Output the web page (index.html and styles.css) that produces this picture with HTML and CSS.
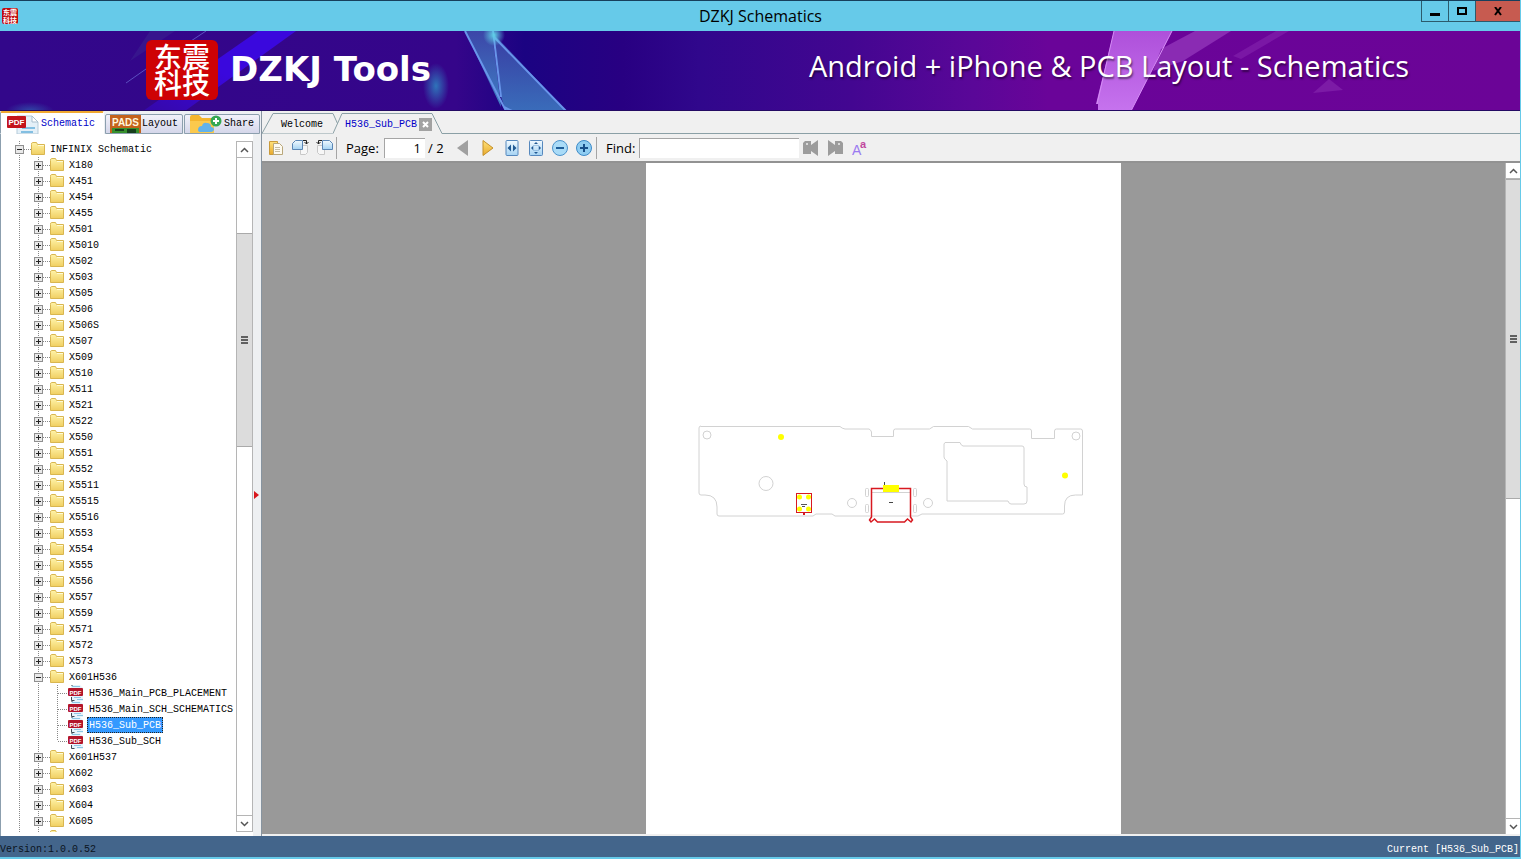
FILE: index.html
```
<!DOCTYPE html>
<html lang="en">
<head>
	<meta charset="UTF-8">
	<title>DZKJ Schematics</title>
	<link rel="stylesheet" href="styles.css">
</head>
<body>
<!-- icons used more than once -->
<svg class="defs" width="0" height="0">
	<defs>
		<linearGradient id="gFolder" x1="0" y1="0" x2="0" y2="1">
			<stop offset="0" stop-color="#fff3a8"/><stop offset="1" stop-color="#f0cf62"/>
		</linearGradient>
		<linearGradient id="gBlue" x1="0" y1="0" x2="0" y2="1">
			<stop offset="0" stop-color="#f2faff"/><stop offset="1" stop-color="#a5d3f3"/>
		</linearGradient>
		<linearGradient id="gGold" x1="0" y1="0" x2="0" y2="1">
			<stop offset="0" stop-color="#ffe27a"/><stop offset="1" stop-color="#e8a92c"/>
		</linearGradient>
	</defs>
	<symbol id="folder" viewBox="0 0 14 13">
		<path d="M.500 2.500q0-2 1-2h4l1 2h7v10H.500z" fill="url(#gFolder)" stroke="#d9b650"/>
		<path d="M7 3.500h6" stroke="#fffbd6"/>
	</symbol>
	<symbol id="pdf" viewBox="0 0 16 16">
		<path d="M3 0h9l3 3v13H3z" fill="#e6f3fb"/>
		<path d="M4 1.500h8M6 12.500h7M9 14.500h6" stroke="#8cc7e4"/>
		<path d="M4 0v1M3.500 12v3.500h3" fill="none" stroke="#3e4a55"/>
		<rect x="0" y="3" width="15" height="8" rx="1" fill="#b3152a"/>
		<text x="7.500" y="9.500" class="pdf-text">PDF</text>
	</symbol>
	<symbol id="up" viewBox="0 0 9 6"><path d="M1 5l3.500-3.500L8 5" fill="none" stroke="#555" stroke-width="1.500"/></symbol>
	<symbol id="down" viewBox="0 0 9 6"><path d="M1 1l3.500 3.500L8 1" fill="none" stroke="#555" stroke-width="1.500"/></symbol>
</svg>

<header class="titlebar">
	<div class="app-icon">东震<br>科技</div>
	<h1>DZKJ Schematics</h1>
	<div class="win-btns">
		<button type="button" aria-label="Minimize"><svg width="11" height="11"><path d="M0 7h10v3H0z"/></svg></button>
		<button type="button" aria-label="Maximize"><svg width="11" height="9"><path d="M1 1h8v6H1z" fill="none" stroke="#000" stroke-width="2"/></svg></button>
		<button type="button" class="close" aria-label="Close"><svg width="9" height="9"><path d="M1 0l6 8M7 0L1 8" stroke="#000" stroke-width="2"/></svg></button>
	</div>
</header>

<div class="banner">
	<svg class="banner-bg" viewBox="0 0 1520 80" preserveAspectRatio="none">
		<defs>
			<linearGradient id="gBanner">
				<stop offset="0" stop-color="#32078a"/>
				<stop offset=".3" stop-color="#35058a"/>
				<stop offset=".345" stop-color="#1b0382"/>
				<stop offset=".41" stop-color="#280082"/>
				<stop offset=".46" stop-color="#30078c"/>
				<stop offset=".56" stop-color="#430691"/>
				<stop offset=".64" stop-color="#5a0798"/>
				<stop offset=".69" stop-color="#6a0499"/>
				<stop offset="1" stop-color="#6b0497"/>
			</linearGradient>
			<linearGradient id="gShard" x1="0" y1="0" x2="0" y2="1">
				<stop offset="0" stop-color="#3c46a8"/><stop offset="1" stop-color="#3f7fc4"/>
			</linearGradient>
			<linearGradient id="gPink" x1="0" y1="0" x2="0" y2="1">
				<stop offset="0" stop-color="#ae50da"/><stop offset="1" stop-color="#c673ee"/>
			</linearGradient>
			<linearGradient id="gBeam" x1="1" y1="0" x2="0" y2="1">
				<stop offset="0" stop-color="#3a08dd"/><stop offset=".5" stop-color="#3a08dd"/><stop offset="1" stop-color="#3508a8"/>
			</linearGradient>
			<radialGradient id="gGlow">
				<stop offset="0" stop-color="#2f74ba"/><stop offset="1" stop-color="#2f74ba" stop-opacity="0"/>
			</radialGradient>
			<radialGradient id="gSpark">
				<stop offset="0" stop-color="#5fd0e6"/><stop offset="1" stop-color="#5fd0e6" stop-opacity="0"/>
			</radialGradient>
		</defs>
		<rect width="1520" height="80" fill="url(#gBanner)"/>
		<path d="M258 0h38L185 80h-42z" fill="url(#gBeam)"/>
		<path d="M150 0h25l-45 30z" fill="#3a2090" opacity=".6"/>
		<path d="M206 0l-18 12M146 38l-20 14" stroke="#5b4fc0"/>
		<ellipse cx="436" cy="55" rx="13" ry="23" fill="url(#gGlow)"/>
		<ellipse cx="30" cy="80" rx="24" ry="9" fill="url(#gGlow)" opacity=".6"/>
		<path d="M465 0h27l9 76z" fill="url(#gShard)"/>
		<path d="M493 2l73 78h-60l-5-14z" fill="url(#gShard)" opacity=".85"/>
		<path d="M465 0l41 80M493 0l8 66M493 5l73 75M504 76l8 4" fill="none" stroke="#6895ea" stroke-width="2"/>
		<circle cx="494" cy="4" r="11" fill="url(#gSpark)"/>
		<path d="M1114 0h58l-41 80h-33v-7h-2z" fill="url(#gPink)"/>
		<path d="M1195 0h36l-48 30-30 10 8-22z" fill="#8a2bb3"/>
		<path d="M1276 0h13l-48 28-8-3z" fill="#7a17a5"/>
		<path d="M1329 48l14 11-30 3z" fill="#7c1ba6"/>
		<path d="M1114 0l-17 73M1172 0l-41 80" stroke="#d58cf5"/>
		<path d="M0 79.500h1520" stroke="#240a63"/>
	</svg>
	<div class="logo">东震<br>科技</div>
	<div class="brand">DZKJ Tools</div>
	<div class="slogan">Android + iPhone &amp; PCB Layout - Schematics</div>
</div>

<div class="main">
	<aside class="side">
		<nav class="side-tabs">
			<button type="button" class="active">
				<svg width="32" height="19" viewBox="0 0 32 19">
					<path d="M10 1h15l6 6v12H10z" fill="#e4f0f8" stroke="#b5cbd9"/>
					<path d="M25 1v6h6z" fill="#fff" stroke="#a9bfce"/>
					<path d="M15 13h13M14 17h12" stroke="#83bfe2" stroke-width="2"/>
					<rect x="0" y="1" width="19" height="12" rx="1" fill="#c4141c"/>
					<text x="9.500" y="10" class="pdf-tab-text">PDF</text>
				</svg>Schematic</button>
			<button type="button" class="tab-layout">
				<svg width="31" height="18" viewBox="0 0 31 18">
					<rect width="31" height="18" fill="#c4621c"/>
					<path d="M2 13h27v5H2z" fill="#36902c"/><path d="M5 14h9v2H5zM17 14h9v4h-9z" fill="#163f1c"/>
					<text x="15.500" y="11" class="pads-text">PADS</text>
				</svg>Layout</button>
			<button type="button" class="tab-share">
				<svg width="32" height="18" viewBox="0 0 32 18">
					<path d="M0 2q0-2 2-2h7l3 3h12v15H0z" fill="#f5b52e"/><path d="M0 6h24v12H0z" fill="#fbc94d"/>
					<path d="M8 15q0-4 4-4 1-4 5-3 4 0 4 4 3 0 3 3-1 2-3 2H11q-3 0-3-2z" fill="#62b2ea"/>
					<circle cx="26" cy="6" r="5.500" fill="#35a853"/><path d="M26 3v6M23 6h6" stroke="#fff" stroke-width="2"/>
				</svg>Share</button>
		</nav>
		<div class="side-body">
			<div class="tree-view"><ul class="tree" id="tree"></ul></div>
			<div class="scrollbar">
				<button type="button" aria-label="Scroll up"><svg width="9" height="6"><use href="#up"/></svg></button>
				<div class="track side-track"><div class="thumb"><i></i></div></div>
				<button type="button" aria-label="Scroll down"><svg width="9" height="6"><use href="#down"/></svg></button>
			</div>
			<div class="splitter"><svg width="5" height="8"><path d="M0 0l5 4-5 4z" fill="#d8161c"/></svg></div>
		</div>
	</aside>

	<section class="viewer">
		<div class="doc-tabs">
			<div class="doc-tab">
				<svg width="80" height="21"><path d="M0 20.500L11 .500h60l9 20" fill="#f0f0f0" stroke="#8ba0a6"/></svg>
				<button type="button">Welcome</button>
			</div>
			<div class="doc-tab current">
				<svg width="109" height="22"><path d="M0 21.500V20.500L9 .500h90l10 20v1" fill="#f0f0f0"/><path d="M0 20.500L9 .500h90l10 20" fill="none" stroke="#8ba0a6"/></svg>
				<button type="button">H536_Sub_PCB</button>
				<button type="button" class="tab-close" aria-label="Close tab"><svg width="7" height="7"><path d="M1 1l5 5M6 1L1 6" stroke="#fff" stroke-width="2"/></svg></button>
			</div>
		</div>

		<div class="toolbar">
			<button type="button" aria-label="Open"><svg width="16" height="16">
				<path d="M1.500 1.500h8v13h-8z" fill="url(#gGold)" stroke="#c99a3a"/>
				<path d="M5.500 3.500h6l3 3v8h-9z" fill="#fdfaf0" stroke="#b9a77b"/><path d="M7 7.500h5M7 9.500h5M7 11.500h5" stroke="#c5bda6"/></svg></button>
			<button type="button" aria-label="Rotate right"><svg width="17" height="17">
				<path d="M8.500 6.500h7v7l-2 2h-5z" fill="#f7f7f7" stroke="#c8c8c8"/>
				<path d="M.500 4.500l3-3h7v9H.500z" fill="url(#gBlue)" stroke="#5b86b5"/><path d="M11 1.500h3.500V5M12.500 3l2 2 2-2" fill="none" stroke="#222"/></svg></button>
			<button type="button" aria-label="Rotate left"><svg width="17" height="17">
				<path d="M1.500 6.500h7v9h-5l-2-2z" fill="#f7f7f7" stroke="#c8c8c8"/>
				<path d="M6.500 1.500h7l3 3v6h-10z" fill="url(#gBlue)" stroke="#5b86b5"/><path d="M6 1.500H2.500V5M.500 3l2 2 2-2" fill="none" stroke="#222"/></svg></button>
			<span class="sep"></span>
			<label for="page">Page:</label>
			<input type="text" id="page" value="1">
			<span class="pages">/ 2</span>
			<button type="button" aria-label="Previous page"><svg width="12" height="16"><path d="M11 0v16L0 8z" fill="#a0a0a0"/></svg></button>
			<button type="button" class="next" aria-label="Next page"><svg width="12" height="16"><path d="M1 .500L11 8 1 15.500z" fill="url(#gGold)" stroke="#c4902a"/></svg></button>
			<button type="button" aria-label="Fit width"><svg width="14" height="16"><rect x="1" y=".500" width="12" height="15" rx="1" fill="url(#gBlue)" stroke="#5688bd"/><path d="M6 4.500v7L2.500 8zM8 4.500v7L11.500 8z" fill="#225a93"/></svg></button>
			<button type="button" aria-label="Fit page"><svg width="14" height="16"><rect x=".500" y=".500" width="13" height="15" rx="1" fill="url(#gBlue)" stroke="#5688bd"/><path d="M7 2l2 2H5zM7 14l2-2H5zM2 8l2-2v4zM12 8l-2-2v4z" fill="#225a93"/><rect x="4.500" y="5.500" width="5" height="5" fill="none" stroke="#6e9fcc" stroke-dasharray="1"/></svg></button>
			<button type="button" aria-label="Zoom out"><svg width="16" height="16"><circle cx="8" cy="8" r="7.500" fill="#a9dbf7" stroke="#4c93cc"/><path d="M4 8h8" stroke="#1d5d99" stroke-width="2"/></svg></button>
			<button type="button" aria-label="Zoom in"><svg width="16" height="16"><circle cx="8" cy="8" r="7.500" fill="#8fcdf2" stroke="#3d8bc8"/><path d="M4 8h8M8 4v8" stroke="#164f8a" stroke-width="2"/></svg></button>
			<span class="sep"></span>
			<label for="find">Find:</label>
			<input type="text" id="find">
			<button type="button" aria-label="Find previous"><svg width="16" height="16"><path d="M0 3l2-2h6v4l7-5v16l-7-5v3H0z" fill="#9c9c9c"/><circle cx="4" cy="4" r="1" fill="#eee"/></svg></button>
			<button type="button" aria-label="Find next"><svg width="16" height="16"><path d="M16 3l-2-2H8v4L1 0v16l7-5v3h8z" fill="#9c9c9c"/><circle cx="12" cy="4" r="1" fill="#eee"/></svg></button>
			<button type="button" aria-label="Match case"><svg width="15" height="16"><text x="0" y="15" class="case-big">A</text><text x="8" y="8" class="case-small">a</text></svg></button>
		</div>

		<div class="doc">
			<div class="canvas">
				<div class="sheet">
					<svg class="board" viewBox="646 163 475 671">
						<g fill="none" stroke="#d2d2d2">
							<path d="M701 426.500H840q2 2 5 2.500h24q2 1 2.500 3v4.500h22V431q0-2 2-2h34l4-2.500h35l4 2.500h57q2 0 2 2v7.500h23V431q0-2 2-2h24q2 0 2 2v64h-7q-11 0-11 11v6q0 2-2 2H922l-4 2h-83l-3-2h-16l-3 2h-94q-2 0-2-2v-7q0-12-12-12h-4q-2 0-2-2v-65q0-2 2-2z"/>
							<path d="M945 442.500h15q1 3 3 3.500h59q2 0 2 2v36q0 3 3 3v14q0 3-3 3h-13q-2 0-3-3h-61v-40q-3-2-3-4v-13z"/>
							<circle cx="707" cy="435" r="4"/><circle cx="1076" cy="436" r="4"/>
							<circle cx="766" cy="483.500" r="7"/><circle cx="852" cy="503" r="4.500"/><circle cx="928" cy="503" r="4.500"/>
							<rect x="865.500" y="488.500" width="3" height="8" rx="1"/><rect x="865.500" y="504.500" width="3" height="8" rx="1"/>
							<rect x="913.500" y="488.500" width="3" height="8" rx="1"/><rect x="913.500" y="504.500" width="3" height="8" rx="1"/>
							<path d="M872 492.500h38"/>
						</g>
						<g fill="#ff0">
							<circle cx="781" cy="437" r="3"/><circle cx="1065" cy="475.500" r="3"/>
							<circle cx="799.500" cy="497" r="2.500"/><circle cx="808.500" cy="497" r="2.500"/>
							<circle cx="799.500" cy="509" r="2.500"/><circle cx="808.500" cy="509" r="2.500"/>
						</g>
						<rect x="796.500" y="493.500" width="15" height="19" fill="none" stroke="#d81920"/>
						<path d="M801 504.500h6M802 506.500h3" stroke="#555"/><path d="M803 512h2v3h-2z" fill="#d81920"/>
						<path d="M871.500 517V488.500h39V517l2 3-1.500 2-3.500-3-3 3h-27l-3-3-3.500 3-1.500-2z" fill="none" stroke="#d81920" stroke-width="1.500"/>
						<path d="M883 485h16v7h-16z" fill="#ff0"/>
						<path d="M884.500 482v3M889 502.500h4" stroke="#444"/>
					</svg>
				</div>
			</div>
			<div class="scrollbar">
				<button type="button" aria-label="Scroll up"><svg width="9" height="6"><use href="#up"/></svg></button>
				<div class="track doc-track"><div class="thumb"><i></i></div></div>
				<button type="button" aria-label="Scroll down"><svg width="9" height="6"><use href="#down"/></svg></button>
			</div>
		</div>
	</section>
</div>

<footer class="status">
	<span>Version:1.0.0.52</span>
	<span class="cur">Current [H536_Sub_PCB]</span>
</footer>
<script src="script.js"></script>
</body>
</html>
```
FILE: styles.css
```
* {
	box-sizing: border-box;
}
html, body {
	height: 100%;
	margin: 0;
}
body {
	display: flex;
	flex-direction: column;
	background: #66cae9;
	color: #000;
	font: 10px/16px "Liberation Mono", "Noto Sans CJK SC", monospace;
	padding: 0 1px 2px 0;
	overflow: hidden;
}
button {
	border: 0;
	padding: 0;
	margin: 0;
	background: none;
	color: inherit;
	font: inherit;
	display: flex;
	align-items: center;
	justify-content: center;
}
svg {
	display: block;
	flex: none;
}
.defs {
	position: absolute;
}

/* lettering inside the icons */
.pdf-text, .pdf-tab-text, .pads-text {
	fill: #fff;
	font: bold 6px "Liberation Sans", sans-serif;
	text-anchor: middle;
}
.pdf-tab-text {
	font-size: 8px;
}
.pads-text {
	fill: #fff6dc;
	font-size: 10px;
}
.case-big {
	fill: #9a7af0;
	font: 14px "Liberation Sans", sans-serif;
}
.case-small {
	fill: #c0479d;
	font: bold 11px "Liberation Sans", sans-serif;
}

/* title bar */
.titlebar {
	position: relative;
	flex: none;
	display: flex;
	align-items: center;
	justify-content: space-between;
	height: 31px;
	border-top: 1px solid #173f5c;
	padding-left: 2px;
}
.titlebar h1 {
	margin: 0;
	flex: 1;
	text-align: center;
	padding-left: 82px;
	font: 16px/28px "Open Sans", sans-serif;
}
.app-icon {
	width: 16px;
	height: 16px;
	border-radius: 2px;
	background: #c00a0e;
	color: #fff;
	font: bold 7px/8px "Noto Sans CJK SC", sans-serif;
	text-align: center;
}
.win-btns {
	display: flex;
	align-self: flex-start;
	border: 1px solid #2c5a6c;
	border-width: 0 0 1px 1px;
}
.win-btns button {
	width: 27px;
	height: 20px;
	border-right: 1px solid #2c5a6c;
}
.win-btns .close {
	width: 44px;
	border: 0;
	background: #c75b50;
}

/* banner */
.banner {
	position: relative;
	flex: none;
	display: flex;
	align-items: center;
	height: 80px;
	padding: 0 111px 0 146px;
	color: #fff;
	overflow: hidden;
	white-space: nowrap;
}
.banner-bg {
	position: absolute;
	left: 0;
	top: 0;
	width: 100%;
	height: 100%;
}
.logo {
	position: relative;
	width: 72px;
	height: 60px;
	margin-bottom: 2px;
	border-radius: 6px;
	background: #ce0204;
	font: 500 28px/26px "Noto Sans CJK SC", sans-serif;
	padding-top: 3px;
	text-align: center;
}
.brand {
	position: relative;
	margin-left: 12px;
	padding-bottom: 4px;
	font: bold 34px/40px "DejaVu Sans", sans-serif;
}
.slogan {
	position: relative;
	margin-left: auto;
	padding-bottom: 10px;
	font: 29px/40px "Open Sans", sans-serif;
	text-shadow: 1px 2px 2px rgba(0,0,0,0.5);
}

/* two panes */
.main {
	flex: 1;
	min-height: 0;
	display: flex;
	background: #f0f0f0;
}
.side {
	flex: none;
	width: 262px;
	display: flex;
	flex-direction: column;
	border-right: 1px solid #8794a0;
}
.side-tabs {
	flex: none;
	display: flex;
	align-items: flex-end;
	gap: 1px;
	height: 23px;
	background: #edf0f4;
}
.side-tabs button {
	height: 20px;
	gap: 2px;
	border: 1px solid #8c9fae;
	border-radius: 2px 2px 0 0;
	background: linear-gradient(#f1f2fa, #d5d7ea);
}
.side-tabs .active {
	width: 104px;
	height: 23px;
	padding: 2px 2px 0 0;
	border-color: #f0a830 #fff #fff #8c9fae;
	border-top-width: 2px;
	background: #fff;
	color: #0000c8;
}
.side-tabs .tab-layout {
	gap: 1px;
}
.tab-layout {
	width: 78px;
}
.tab-share {
	width: 76px;
}
.side-body {
	flex: 1;
	min-height: 0;
	display: flex;
	padding: 7px 0 4px;
	border-left: 1px solid #8c9fae;
	background: #fff;
}
.tree-view {
	flex: 1;
	overflow: hidden;
}

.tree, .tree ul {
	list-style: none;
	margin: 0;
	padding: 0;
}
.tree, .tree ul {
	background: repeating-linear-gradient(#888 0 1px, transparent 1px 2px) no-repeat;
	background-size: 1px 100%;
}
.tree {
	background-position: 18px 0;
}
.tree .level1 {
	background-position: 37px 0;
}
.tree .level2 {
	background-position: 56px 0;
	background-size: 1px 56px;
}
.row {
	display: flex;
	align-items: center;
	height: 16px;
	padding-left: 14px;
	white-space: nowrap;
}
.level1 .row {
	padding-left: 33px;
}
.level2 .row {
	padding-left: 57px;
}
.row .toggle {
	position: relative;
	width: 9px;
	height: 9px;
	border: 1px solid #8f8f8f;
	background: #e9e9e9;
}
.toggle:before, .toggle.plus:after {
	content: "";
	position: absolute;
	left: 1px;
	top: 3px;
	width: 5px;
	height: 1px;
	background: #222;
}
.toggle.plus:after {
	left: 3px;
	top: 1px;
	width: 1px;
	height: 5px;
}
.dots {
	width: 7px;
	height: 1px;
	background: repeating-linear-gradient(90deg, #888 0 1px, transparent 1px 2px);
}
.level2 .dots {
	width: 10px;
}
.row .folder {
	margin-bottom: 2px;
}
.row a {
	color: #000;
	text-decoration: none;
	margin-left: 3px;
	padding: 0 2px;
	height: 16px;
	line-height: 18px;
}
.row a.selected {
	background: #3399ff;
	color: #fff;
	outline: 1px dotted #222;
	outline-offset: -1px;
}

.scrollbar {
	flex: none;
	display: flex;
	flex-direction: column;
	width: 17px;
	border: 1px solid #b5b5b5;
	background: #fff;
}
.scrollbar button {
	height: 16px;
	width: 100%;
	border-bottom: 1px solid #b5b5b5;
}
.scrollbar button:last-child {
	border-bottom: 0;
	border-top: 1px solid #b5b5b5;
}
.track {
	flex: 1;
}
.thumb {
	display: flex;
	align-items: center;
	justify-content: center;
	background: #dcdcdc;
	border: 1px solid #aaa;
	border-width: 1px 0;
}
.thumb i {
	width: 7px;
	height: 8px;
	background: repeating-linear-gradient(#606060 0 2px, transparent 2px 3px);
}
.side-track {
	padding-top: 75px;
}
.side-track .thumb {
	height: 214px;
}
.splitter {
	flex: none;
	display: flex;
	align-items: center;
	width: 8px;
	margin: -7px 0 -4px;
	padding-left: 1px;
	background: #eef0f2;
}
.splitter svg {
	margin-top: 20px;
}

/* right pane */
.viewer {
	flex: 1;
	min-width: 0;
	display: flex;
	flex-direction: column;
	padding-bottom: 2px;
}
.doc-tabs {
	flex: none;
	display: flex;
	align-items: flex-end;
	height: 23px;
	background: #f0f0f0;
	box-shadow: inset 0 -1px #8ba0a6;
}
.doc-tab {
	position: relative;
	display: flex;
	align-items: center;
	width: 80px;
	height: 21px;
	padding: 2px 0 0 19px;
}
.doc-tab > svg {
	position: absolute;
	left: 0;
	top: 0;
}
.doc-tab button {
	position: relative;
}
.doc-tab.current {
	width: 109px;
	margin-left: -9px;
	padding-left: 12px;
	color: #0000c8;
}
.doc-tab .tab-close {
	width: 13px;
	height: 13px;
	margin-left: 2px;
	background: #a2a2a2;
}
.toolbar {
	flex: none;
	display: flex;
	align-items: center;
	height: 29px;
	padding-left: 2px;
	border-bottom: 2px solid #929292;
	background: #f0f0f0;
	font: 13px/20px "Open Sans", sans-serif;
}
.toolbar button {
	width: 24px;
	height: 24px;
}
.toolbar .next {
	width: 25px;
}
.sep {
	width: 1px;
	height: 22px;
	background: #a5a5a5;
}
.toolbar label {
	padding-left: 9px;
	width: 47px;
}
.toolbar label[for=find] {
	width: 42px;
}
.toolbar input {
	height: 20px;
	width: 41px;
	border: 1px solid #a5a5a5;
	border-width: 1px 0 0 1px;
	background: #fff;
	padding: 0 4px;
	font: inherit;
	text-align: right;
}
.toolbar #find {
	width: 160px;
	text-align: left;
}
.pages {
	width: 26px;
	padding-left: 3px;
	white-space: nowrap;
}
.doc {
	flex: 1;
	min-height: 0;
	display: flex;
	background: #999;
}
.canvas {
	flex: 1;
	min-width: 0;
	display: flex;
	justify-content: center;
	overflow: hidden;
}
.sheet {
	width: 475px;
	background: #fff;
}
.board {
	width: 100%;
}
.doc .scrollbar {
	width: 15px;
	border-width: 0 0 0 1px;
}
.doc-track .thumb {
	height: 320px;
}

/* status bar */
.status {
	flex: none;
	display: flex;
	justify-content: space-between;
	height: 21px;
	padding-top: 5px;
	background: #43658b;
	color: #0b1420;
	line-height: 18px;
}
.status .cur {
	color: #fff;
	padding-right: 1px;
}
```
FILE: script.js
```
var models = ['X180','X451','X454','X455','X501','X5010','X502','X503','X505','X506','X506S','X507','X509',
	'X510','X511','X521','X522','X550','X551','X552','X5511','X5515','X5516','X553','X554','X555','X556',
	'X557','X559','X571','X572','X573','X601H536','X601H537','X602','X603','X604','X605',''];
var files = {
	X601H536: ['H536_Main_PCB_PLACEMENT','H536_Main_SCH_SCHEMATICS','H536_Sub_PCB','H536_Sub_SCH']
};
var current = 'H536_Sub_PCB';

function folderRow(name, open) {
	return '<div class="row"><button type="button" class="toggle' + (open ? '' : ' plus') + '" aria-label="Toggle ' + name + '"></button>' +
		'<span class="dots"></span><svg class="folder" width="14" height="13"><use href="#folder"/></svg><a href="#">' + name + '</a></div>';
}

function fileRow(name) {
	return '<li><div class="row"><span class="dots"></span><svg width="16" height="16"><use href="#pdf"/></svg>' +
		'<a href="#"' + (name === current ? ' class="selected"' : '') + '>' + name + '</a></div></li>';
}

var html = models.map(function (name) {
	var list = files[name];
	return '<li>' + folderRow(name, !!list) + (list ? '<ul class="level2">' + list.map(fileRow).join('') + '</ul>' : '') + '</li>';
}).join('');

document.getElementById('tree').innerHTML = '<li>' + folderRow('INFINIX Schematic', true) + '<ul class="level1">' + html + '</ul></li>';
```
